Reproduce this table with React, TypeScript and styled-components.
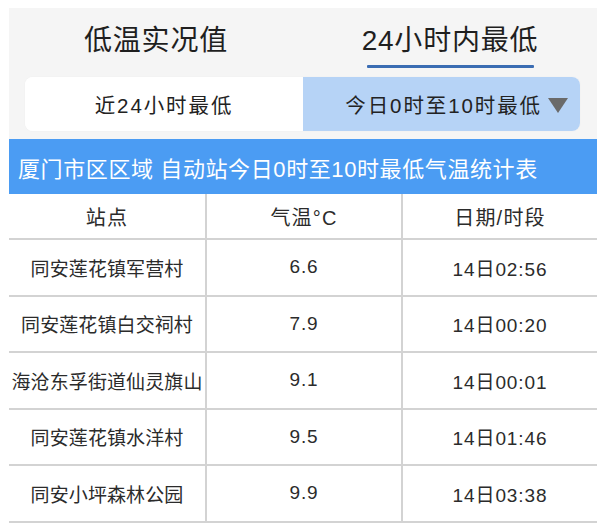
import React from "react";
import styled, { createGlobalStyle } from "styled-components";

const Global = createGlobalStyle`
  html, body { margin: 0; padding: 0; background: #ffffff; }
  body {
    font-family: "Liberation Sans", "Noto Sans CJK SC", sans-serif;
    color: #333333;
  }
`;

const Page = styled.div`
  width: 600px;
  height: 524px;
  box-sizing: border-box;
  padding: 8px 3px 0 9px;
  overflow: hidden;
`;

const Top = styled.div`
  background: #f5f5f5;
  padding-bottom: 8px;
`;

const Tabs = styled.div`
  display: grid;
  grid-template-columns: 1fr 1fr;
  height: 62px;
`;

const Tab = styled.div<{ $active?: boolean }>`
  position: relative;
  display: flex;
  align-items: center;
  justify-content: center;
  padding-bottom: 2px;
  font-size: 28px;
  color: #1f1f1f;
  letter-spacing: 0.8px;
  &::after {
    content: "";
    display: ${(p) => (p.$active ? "block" : "none")};
    position: absolute;
    left: 50%;
    bottom: 2px;
    width: 167px;
    height: 3px;
    margin-left: -83px;
    background: #3b6db3;
    border-radius: 1px;
  }
`;

const Segment = styled.div`
  display: grid;
  grid-template-columns: 278px 1fr;
  margin: 7px 17px 0 16px;
  height: 54px;
  border-radius: 8px;
  overflow: hidden;
  background: #ffffff;
  box-shadow: 0 0 2px rgba(0, 0, 0, 0.04);
`;

const SegItem = styled.div<{ $active?: boolean }>`
  display: flex;
  align-items: center;
  justify-content: ${(p) => (p.$active ? "flex-end" : "center")};
  padding-right: ${(p) => (p.$active ? "12px" : "0")};
  background: ${(p) => (p.$active ? "#b6d3f6" : "#ffffff")};
  font-size: 20.5px;
  letter-spacing: 1.9px;
  color: #222222;
  gap: 6px;
`;

const Caret = styled.span`
  width: 0;
  height: 0;
  border-left: 10px solid transparent;
  border-right: 10px solid transparent;
  border-top: 15px solid #6a6a6a;
  margin-top: 2px;
`;

const TitleBar = styled.div`
  height: 55px;
  display: flex;
  align-items: center;
  padding-left: 9px;
  background: #4b9cf3;
  color: #ffffff;
  font-size: 22px;
  letter-spacing: 0.6px;
  white-space: nowrap;
`;

const Table = styled.div`
  display: grid;
  grid-template-columns: 198px 196px 1fr;
`;

const Cell = styled.div<{ $head?: boolean; $last?: boolean }>`
  height: ${(p) => (p.$head ? "46px" : "56.5px")};
  box-sizing: border-box;
  display: flex;
  align-items: center;
  justify-content: center;
  border-bottom: 2px solid #d3d3d3;
  border-right: ${(p) => (p.$last ? "none" : "2px solid #d3d3d3")};
  font-size: ${(p) => (p.$head ? "20px" : "19px")};
  letter-spacing: ${(p) => (p.$head ? "1.2px" : "0.1px")};
  color: #2b2b2b;
  white-space: nowrap;
`;

const Num = styled.span`
  letter-spacing: 0.9px;
`;

const rows = [
  ["同安莲花镇军营村", "6.6", "14日02:56"],
  ["同安莲花镇白交祠村", "7.9", "14日00:20"],
  ["海沧东孚街道仙灵旗山", "9.1", "14日00:01"],
  ["同安莲花镇水洋村", "9.5", "14日01:46"],
  ["同安小坪森林公园", "9.9", "14日03:38"],
];

export default function App() {
  return (
    <>
      <Global />
      <Page>
        <Top>
          <Tabs>
            <Tab>低温实况值</Tab>
            <Tab $active>24小时内最低</Tab>
          </Tabs>
          <Segment>
            <SegItem>近24小时最低</SegItem>
            <SegItem $active>
              今日0时至10时最低
              <Caret />
            </SegItem>
          </Segment>
        </Top>
        <TitleBar>厦门市区区域 自动站今日0时至10时最低气温统计表</TitleBar>
        <Table>
          <Cell $head>站点</Cell>
          <Cell $head>气温°C</Cell>
          <Cell $head $last>日期/时段</Cell>
          {rows.map((r) => (
            <React.Fragment key={r[0]}>
              <Cell>{r[0]}</Cell>
              <Cell>
                <Num>{r[1]}</Num>
              </Cell>
              <Cell $last>
                <Num>{r[2]}</Num>
              </Cell>
            </React.Fragment>
          ))}
        </Table>
      </Page>
    </>
  );
}
